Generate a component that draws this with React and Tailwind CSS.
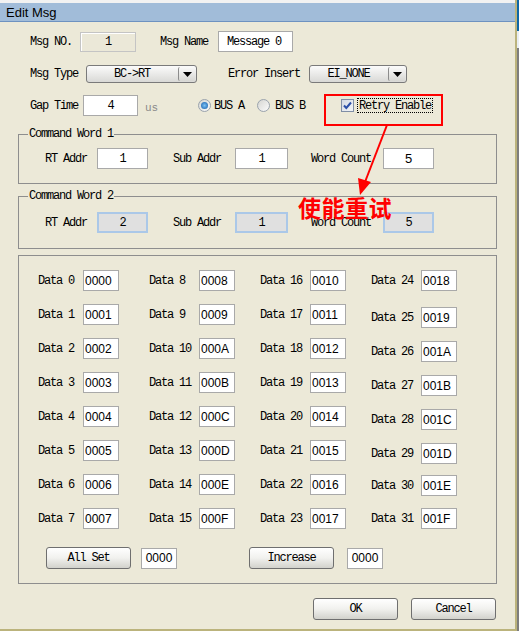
import React from "react";

// shared text styles
const MONO = "font-['Liberation_Mono',monospace] text-[12px] tracking-[-1.2px] leading-none text-black whitespace-nowrap";
const SANS = "font-['Liberation_Sans',sans-serif] text-[12px] leading-none text-black whitespace-nowrap";

function Field({ className = "", children, left = false, font = MONO }) {
  return (
    <div
      className={`flex h-[21px] shrink-0 items-center border border-[#a9a9a9] bg-white ${
        left ? "justify-start pl-[1px]" : "justify-center"
      } ${font} ${className}`}
    >
      {children}
    </div>
  );
}

function DisabledField({ className = "", children }) {
  return (
    <div
      className={`flex h-[21px] shrink-0 items-center justify-center border-2 border-[#abc8e8] bg-[#e0e0e0] ${MONO} text-[#9a9a9a] ${className}`}
    >
      {children}
    </div>
  );
}

function Combo({ value, className = "" }) {
  return (
    <div className={`flex h-[18px] shrink-0 rounded-[3px] border border-[#7a7a7a] bg-linear-to-b from-[#fbfbfb] to-[#d9d9d6] ${className}`}>
      <div className={`flex flex-1 items-center justify-center ${MONO}`}>{value}</div>
      <div className="m-[1px] flex w-[17px] items-center justify-center rounded-[2px] border-l border-[#8c8c8c] bg-linear-to-b from-[#fafafa] to-[#d6d6d2]">
        <svg width="9" height="5" viewBox="0 0 9 5">
          <path d="M0 0h9L4.5 5z" fill="#000" />
        </svg>
      </div>
    </div>
  );
}

function Btn({ children, className = "" }) {
  return (
    <div
      className={`flex h-[22px] w-[85px] shrink-0 items-center justify-center rounded-[3px] border border-[#6f6f6f] bg-linear-to-b from-[#ffffff] via-[#f1f1ee] to-[#d2d2cc] ${MONO} ${className}`}
    >
      {children}
    </div>
  );
}

function Radio({ checked }) {
  return (
    <div className="flex h-[13px] w-[13px] shrink-0 items-center justify-center rounded-full border border-[#9aa3ad] bg-linear-to-br from-[#d6d6d2] to-[#fbfbfb]">
      {checked && <div className="h-[7px] w-[7px] rounded-full bg-radial from-[#7cc2f5] to-[#0d5aa8]" />}
    </div>
  );
}

const hex = (n) => n.toString(16).toUpperCase().padStart(4, "0");

// col 4 rows sit a few px lower than the rest
const COL4_GAPS = ["", "mt-[16px]", "mt-[13px]", "mt-[13px]", "mt-[13px]", "mt-[13px]", "mt-[11px]", "mt-[12px]"];

function DataCol({ col, labelW, className = "" }) {
  return (
    <div className={`flex flex-col ${col === 3 ? "" : "gap-[13px]"} ${className}`}>
      {Array.from({ length: 8 }).map((_, i) => {
        const n = col * 8 + i;
        return (
          <div key={n} className={`flex h-[21px] items-center ${col === 3 ? COL4_GAPS[i] : ""}`}>
            <span className={`${labelW} ${MONO}`}>Data {n}</span>
            <Field left font={SANS} className="w-[36px]">
              {hex(n)}
            </Field>
          </div>
        );
      })}
    </div>
  );
}

export default function App() {
  return (
    <div className="relative flex h-[631px] w-[519px] overflow-hidden bg-[#ece9d8]">
      {/* dialog window */}
      <div className="flex w-[517px] flex-col border-r-2 border-b-2 border-[#bbb37c]">
        <div className="flex h-[22px] items-center border-t-[3px] border-b border-t-[#f2f2f2] border-b-[#6e92c0] bg-[#a1bcd9] pl-[6px]">
          <span className="font-['Liberation_Sans',sans-serif] text-[13px] leading-none text-black">Edit Msg</span>
        </div>

        <div className="flex flex-1 flex-col">
          {/* row 1 */}
          <div className="mt-[9px] flex h-[21px] items-center pl-[30px]">
            <span className={`w-[50px] ${MONO}`}>Msg NO.</span>
            <div className={`flex h-[20px] w-[56px] items-center justify-center border border-[#c4c4c4] bg-[#ebe8d8] shadow-[inset_1px_1px_0_#fff] ${MONO}`}>
              1
            </div>
            <span className={`ml-[24px] w-[58px] ${MONO}`}>Msg Name</span>
            <Field left className="w-[75px] pl-[8px]">
              Message 0
            </Field>
          </div>

          {/* row 2 */}
          <div className="mt-[13px] flex h-[18px] items-center pl-[30px]">
            <span className={`w-[56px] ${MONO}`}>Msg Type</span>
            <Combo value="BC->RT" className="w-[111px]" />
            <span className={`ml-[31px] w-[81px] ${MONO}`}>Error Insert</span>
            <Combo value="EI_NONE" className="w-[98px]" />
          </div>

          {/* row 3 */}
          <div className="mt-[12px] flex h-[21px] items-center pl-[30px]">
            <span className={`w-[53px] ${MONO}`}>Gap Time</span>
            <Field className="w-[55px]">4</Field>
            <span className="ml-[7px] mt-[6px] w-[53px] font-['Liberation_Mono',monospace] text-[11px] leading-none text-[#8a8a8a]">us</span>
            <Radio checked />
            <span className={`ml-[3px] w-[43px] ${MONO}`}>BUS A</span>
            <Radio />
            <span className={`ml-[5px] w-[66px] ${MONO}`}>BUS B</span>
            <div className="flex h-[13px] w-[13px] items-center justify-center border border-[#7f8ea6] bg-linear-to-br from-[#d3d9e3] to-[#f3f5f8]">
              <svg width="9" height="9" viewBox="0 0 9 9">
                <path d="M1 4.5l2.3 2.5L8 1.5" fill="none" stroke="#2b4fa8" strokeWidth="2" />
              </svg>
            </div>
            <span className={`ml-[3px] flex h-[15px] items-center border border-dotted border-black px-[1px] ${MONO}`}>
              Retry Enable
            </span>
          </div>

          {/* command word 1 */}
          <fieldset className="mx-[18px] mt-[12px] h-[56px] border border-[#8e8e8e]">
            <legend className={`ml-[9px] px-[1px] leading-[14px] ${MONO}`}>Command Word 1</legend>
            <div className="mt-[8px] flex h-[21px] items-center pl-[26px]">
              <span className={`w-[52px] ${MONO}`}>RT Addr</span>
              <Field className="w-[51px]">1</Field>
              <span className={`ml-[25px] w-[62px] ${MONO}`}>Sub Addr</span>
              <Field className="w-[53px]">1</Field>
              <span className={`ml-[23px] w-[72px] ${MONO}`}>Word Count</span>
              <Field font={SANS} className="w-[51px] text-[13px]">5</Field>
            </div>
          </fieldset>

          {/* command word 2 (disabled) */}
          <fieldset className="mx-[18px] mt-[6px] h-[59px] border border-[#8e8e8e]">
            <legend className={`ml-[9px] px-[1px] leading-[14px] ${MONO}`}>Command Word 2</legend>
            <div className="mt-[10px] flex h-[21px] items-center pl-[26px]">
              <span className={`w-[52px] ${MONO} text-[#9a9a9a]`}>RT Addr</span>
              <DisabledField className="w-[51px]">2</DisabledField>
              <span className={`ml-[25px] w-[62px] ${MONO} text-[#9a9a9a]`}>Sub Addr</span>
              <DisabledField className="w-[53px]">1</DisabledField>
              <span className={`ml-[23px] w-[72px] ${MONO} text-[#9a9a9a]`}>Word Count</span>
              <DisabledField className="w-[51px]">5</DisabledField>
            </div>
          </fieldset>

          {/* data words */}
          <div className="mx-[18px] mt-[6px] flex h-[329px] flex-col border border-[#8e8e8e] pl-[19px] pt-[14px]">
            <div className="flex">
              <DataCol col={0} labelW="w-[45px]" />
              <DataCol col={1} labelW="w-[50px]" className="ml-[30px]" />
              <DataCol col={2} labelW="w-[50px]" className="ml-[25px]" />
              <DataCol col={3} labelW="w-[50px]" className="ml-[25px]" />
            </div>
            <div className="mt-[18px] flex h-[22px] items-center pl-[8px]">
              <Btn>All Set</Btn>
              <Field font={SANS} className="ml-[10px] w-[36px]">0000</Field>
              <Btn className="ml-[72px]">Increase</Btn>
              <Field font={SANS} className="ml-[13px] w-[36px]">0000</Field>
            </div>
          </div>

          <div className="mt-[14px] flex justify-end gap-[13px] pr-[19px]">
            <Btn>OK</Btn>
            <Btn>Cancel</Btn>
          </div>
        </div>
      </div>

      {/* desktop sliver on the right */}
      <div className="flex w-[2px] flex-col">
        <div className="h-[31px] bg-[#0f67a6]" />
        <div className="h-[17px] bg-[#e9eef3]" />
        <div className="flex-1 bg-[#7d7d7d]" />
      </div>

      {/* annotation overlay */}
      <div className="pointer-events-none absolute left-[324px] top-[94px] h-[32px] w-[119px] border-2 border-[#ff0000]" />
      <svg className="pointer-events-none absolute left-0 top-0" width="519" height="631">
        <line x1="387" y1="125" x2="365" y2="182" stroke="#ff0000" strokeWidth="2" />
        <polygon points="360,195 371,182 358,178" fill="#ff0000" />
      </svg>
      <div className="pointer-events-none absolute left-[298px] top-[196px] font-['Noto_Sans_CJK_SC',sans-serif] text-[23px] font-bold leading-none tracking-[0.5px] text-[#ff0000]">
        使能重试
      </div>
    </div>
  );
}
